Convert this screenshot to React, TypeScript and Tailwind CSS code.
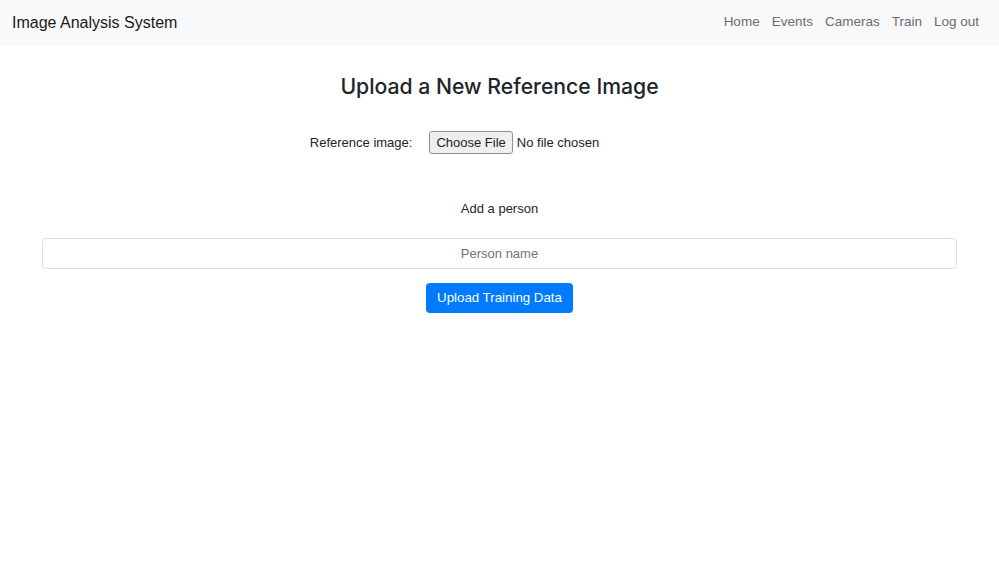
export default function App() {
  const font = { fontFamily: '"Liberation Sans", Arial, sans-serif' };
  return (
    <div className="min-h-[575px] bg-white text-[#212529]" style={font}>
      {/* top navbar */}
      <nav className="flex h-[45px] items-center justify-between bg-[#f8f9fa] pl-[12px] pr-[20px]">
        <span className="text-[16px] text-[#1a1a1a]">Image Analysis System</span>
        <div className="flex items-center gap-[12px] text-[13.5px] text-[#6c6c6c]">
          <a>Home</a>
          <a>Events</a>
          <a>Cameras</a>
          <a>Train</a>
          <a>Log out</a>
        </div>
      </nav>

      <main className="flex flex-col items-center">
        <h1
          className="mt-[28px] text-[21.2px] font-medium leading-[26px] text-[#212529]"
          style={{ fontFamily: 'Inter, "Liberation Sans", sans-serif' }}
        >
          Upload a New Reference Image
        </h1>

        <div className="mt-[32px] flex items-center text-[13px]">
          <span className="mr-[17px]">Reference image:</span>
          <span className="flex h-[23px] items-center rounded-[3px] border border-[#8f8f8f] bg-[#efefef] px-[6px] text-[13px]">
            Choose File
          </span>
          <span className="ml-[4px]">No file chosen</span>
          {/* empty slot after the file field keeps the row off-centre */}
          <span className="w-[90px]" />
        </div>

        <p className="mt-[46px] text-[13px] leading-[18px]">Add a person</p>

        <div className="mt-[20px] w-full px-[42px]">
          <input
            placeholder="Person name"
            className="h-[31px] w-full rounded-[4px] border border-[#dcdfe3] bg-white text-center text-[13px] placeholder:text-[#6c757d] outline-none"
            style={font}
          />
        </div>

        <button className="mt-[14px] h-[30px] rounded-[4px] bg-[#007bff] px-[11px] text-[13.3px] text-white">
          Upload Training Data
        </button>
      </main>
    </div>
  );
}
